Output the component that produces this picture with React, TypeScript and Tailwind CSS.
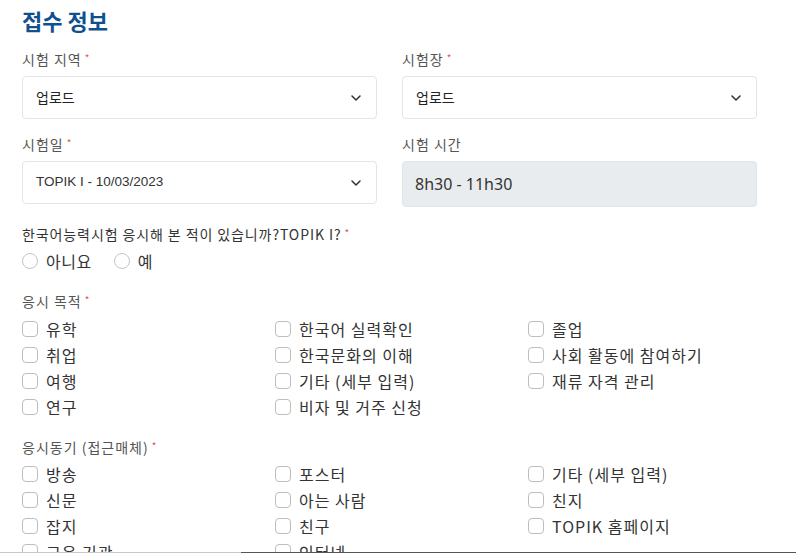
import React from "react";

const kr = { fontFamily: '"Noto Sans CJK KR", "Noto Sans", sans-serif' };

function Req() {
  return <span className="text-[#e5534b] text-[10px] ml-[3px] align-top relative top-[-1px] tracking-normal">*</span>;
}

function Label({ children, req }: { children: React.ReactNode; req?: boolean }) {
  return (
    <div className="text-[14px] leading-[18px] tracking-[1px] text-[#555]" style={kr}>
      {children}
      {req && <Req />}
    </div>
  );
}

function Chevron() {
  return (
    <svg width="16" height="16" viewBox="0 0 24 24" fill="none" stroke="#333" strokeWidth="2.3" strokeLinecap="round" strokeLinejoin="round">
      <path d="m6 9 6 6 6-6" />
    </svg>
  );
}

function Select({ value, latin }: { value: string; latin?: boolean }) {
  return (
    <div className="mt-[8px] h-[43px] border border-[#e2e4e7] rounded-[4px] bg-white flex items-center justify-between pl-[13px] pr-[12px]">
      <span
        className={latin ? "text-[13.5px] text-[#333]" : "text-[14px] text-[#222]"}
        style={latin ? { fontFamily: '"Liberation Sans", Arial, sans-serif' } : kr}
      >
        {value}
      </span>
      <Chevron />
    </div>
  );
}

function Check({ label }: { label: string }) {
  return (
    <div className="flex items-center h-[26px]">
      <span className="w-[16px] h-[16px] border border-[#bdbdbd] rounded-[4px] bg-white shrink-0" />
      <span className="ml-[8px] text-[16px] leading-[26px] tracking-[1px] text-[#333] whitespace-nowrap" style={kr}>
        {label}
      </span>
    </div>
  );
}

function Radio({ label }: { label: string }) {
  return (
    <div className="flex items-center h-[24px]">
      <span className="w-[16px] h-[16px] border border-[#c4c4c4] rounded-full bg-white shrink-0" />
      <span className="ml-[8px] text-[16px] leading-[24px] tracking-[0.5px] text-[#333]" style={kr}>
        {label}
      </span>
    </div>
  );
}

const purposes = [
  "유학", "한국어 실력확인", "졸업",
  "취업", "한국문화의 이해", "사회 활동에 참여하기",
  "여행", "기타 (세부 입력)", "재류 자격 관리",
  "연구", "비자 및 거주 신청",
];

const motives = [
  "방송", "포스터", "기타 (세부 입력)",
  "신문", "아는 사람", "친지",
  "잡지", "친구", "TOPIK 홈페이지",
  "교육 기관", "인터넷",
];

export default function App() {
  return (
    <div className="relative w-[796px] h-[553px] overflow-hidden bg-white">
      <div className="px-[22px] pt-[4px]">
        <h1 className="text-[22px] leading-[32px] font-bold text-[#11508f]" style={kr}>
          접수 정보
        </h1>

        <div className="mt-[14px] grid grid-cols-[355px_355px] gap-x-[25px] gap-y-[16px]">
          <div>
            <Label req>시험 지역</Label>
            <Select value="업로드" />
          </div>
          <div>
            <Label req>시험장</Label>
            <Select value="업로드" />
          </div>
          <div>
            <Label req>시험일</Label>
            <Select value="TOPIK I - 10/03/2023" latin />
          </div>
          <div>
            <Label>시험 시간</Label>
            <div className="mt-[8px] h-[46px] border border-[#e2e5e8] rounded-[4px] bg-[#e9ecef] flex items-center pl-[12px]">
              <span className="text-[16px] text-[#333]" style={{ fontFamily: '"Noto Sans", sans-serif' }}>
                8h30 - 11h30
              </span>
            </div>
          </div>
        </div>

        <div className="mt-[17px] text-[14px] leading-[20px] tracking-[0.9px] text-[#333]" style={kr}>
          한국어능력시험 응시해 본 적이 있습니까?TOPIK I?
          <Req />
        </div>
        <div className="mt-[5px] flex gap-[22px]">
          <Radio label="아니요" />
          <Radio label="예" />
        </div>

        <div className="mt-[19px]">
          <Label req>응시 목적</Label>
        </div>
        <div className="mt-[6px] grid grid-cols-[253px_253px_253px]">
          {purposes.map((p) => (
            <Check key={p} label={p} />
          ))}
        </div>

        <div className="mt-[18px]">
          <Label req>응시동기 (접근매체)</Label>
        </div>
        <div className="mt-[5px] grid grid-cols-[253px_253px_253px]">
          {motives.map((p) => (
            <Check key={p} label={p} />
          ))}
        </div>
      </div>

      <div className="absolute left-0 bottom-0 w-[796px] h-[1px] flex">
        <div className="w-[241px] bg-[#c8c8c8]" />
        <div className="flex-1 bg-[#555]" />
      </div>
    </div>
  );
}
